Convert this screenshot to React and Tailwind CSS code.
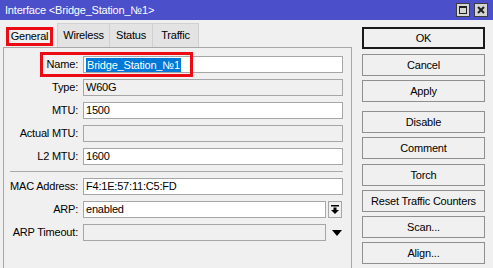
import React from 'react'

const ROWS_TOP = [
  { label: 'Name:', value: 'Bridge_Station_№1', editable: true, selected: true },
  { label: 'Type:', value: 'W60G', editable: false },
  { label: 'MTU:', value: '1500', editable: true },
  { label: 'Actual MTU:', value: '', editable: false },
  { label: 'L2 MTU:', value: '1600', editable: true },
]

const BUTTONS = [
  { label: 'OK', mt: 'mt-0', primary: true },
  { label: 'Cancel', mt: 'mt-[5px]' },
  { label: 'Apply', mt: 'mt-[4px]' },
  { label: 'Disable', mt: 'mt-[9px]' },
  { label: 'Comment', mt: 'mt-[4px]' },
  { label: 'Torch', mt: 'mt-[5px]' },
  { label: 'Reset Traffic Counters', mt: 'mt-[4px]' },
  { label: 'Scan...', mt: 'mt-[4px]' },
  { label: 'Align...', mt: 'mt-[4px]' },
]

function Field({ label, value, editable, selected, width = 'w-[260px]', children }) {
  return (
    <div className="relative flex items-center h-[17px]">
      <div className="w-[75px] text-right pr-[1px]">{label}</div>
      <div
        className={`ml-[4px] ${width} h-[17px] border border-[#a6a6a6] flex items-center pl-[2px] ${
          editable ? 'bg-white' : 'bg-[#f0f0f0]'
        }`}
      >
        {selected ? (
          <span className="bg-[#0078d7] text-white px-[1px] leading-[14px]">{value}</span>
        ) : (
          <span>{value}</span>
        )}
      </div>
      {children}
      {selected && (
        <div className="absolute left-[36px] -top-[4px] w-[153px] h-[25px] border-[3px] border-[#ec0b12]" />
      )}
    </div>
  )
}

export default function App() {
  return (
    <div className="w-[493px] h-[268px] bg-[#f0f0f0] overflow-hidden flex flex-col text-black text-[11px] tracking-[-0.2px] font-['Liberation_Sans',Arial,sans-serif]">
      {/* Title bar */}
      <div className="h-[20px] bg-[#4b4fc9] flex items-center pl-[5px] pr-[5px] text-white">
        <span className="flex-1">Interface &lt;Bridge_Station_№1&gt;</span>
        <div className="flex gap-[4px]">
          <div className="w-[14px] h-[14px] bg-[#d4d4d4] border border-[#3c3c3c] flex items-center justify-center">
            <div className="w-[8px] h-[8px] border border-t-2 border-[#202020]" />
          </div>
          <div className="w-[14px] h-[14px] bg-[#d4d4d4] border border-[#3c3c3c] flex items-center justify-center">
            <svg width="8" height="8" viewBox="0 0 8 8">
              <path d="M1 1 L7 7 M7 1 L1 7" stroke="#202020" strokeWidth="2" />
            </svg>
          </div>
        </div>
      </div>

      <div className="flex flex-1">
        {/* Left: tabs + panel */}
        <div className="w-[352px] pl-[3px] pt-[3px] flex flex-col">
          <div className="h-[24px] flex items-end pl-[3px]">
            <div className="w-[47px] h-[19px] mb-[1px] border-[3px] border-[#ec0b12] bg-[#f0f0f0] flex items-center justify-center">
              General
            </div>
            <div className="ml-[4px] w-[53px] h-[24px] bg-[#e3e3e3] border border-b-0 border-[#d0d0d0] flex items-center justify-center">
              Wireless
            </div>
            <div className="w-[43px] h-[24px] bg-[#e3e3e3] border border-b-0 border-l-0 border-[#d0d0d0] flex items-center justify-center">
              Status
            </div>
            <div className="w-[46px] h-[24px] bg-[#e3e3e3] border border-b-0 border-l-0 border-[#d0d0d0] flex items-center justify-center">
              Traffic
            </div>
          </div>

          <div className="flex-1 border-l border-t border-r border-[#a8a8a8] pt-[8px] flex flex-col">
            <div className="flex flex-col gap-[6px]">
              {ROWS_TOP.map((r) => (
                <Field key={r.label} {...r} />
              ))}
            </div>

            <div className="ml-[6px] w-[333px] h-[1px] bg-[#a8a8a8] mt-[6px] mb-[6px]" />

            <div className="flex flex-col gap-[6px]">
              <Field label="MAC Address:" value="F4:1E:57:11:C5:FD" editable />
              <Field label="ARP:" value="enabled" editable width="w-[243px]">
                <div className="ml-[2px] w-[14px] h-[17px] bg-[#f0f0f0] border border-[#a6a6a6] flex items-center justify-center">
                  <svg width="8" height="9" viewBox="0 0 8 9">
                    <rect x="0" y="0" width="8" height="1.5" fill="#000" />
                    <path d="M2.5 2.5 H5.5 V5 H8 L4 9 L0 5 H2.5 Z" fill="#000" />
                  </svg>
                </div>
              </Field>
              <Field label="ARP Timeout:" value="" editable={false} width="w-[243px]">
                <svg className="ml-[6px]" width="10" height="6" viewBox="0 0 10 6">
                  <path d="M0 0 H10 L5 6 Z" fill="#000" />
                </svg>
              </Field>
            </div>
          </div>
        </div>

        {/* Right: buttons */}
        <div className="pl-[10px] pt-[7px] flex flex-col">
          {BUTTONS.map((b) => (
            <div
              key={b.label}
              className={`${b.mt} w-[123px] h-[22px] flex items-center justify-center bg-[#f0f0f0] ${
                b.primary ? 'border-2 border-[#1a1a1a]' : 'border border-[#8f8f8f]'
              }`}
            >
              {b.label}
            </div>
          ))}
        </div>
      </div>
    </div>
  )
}
